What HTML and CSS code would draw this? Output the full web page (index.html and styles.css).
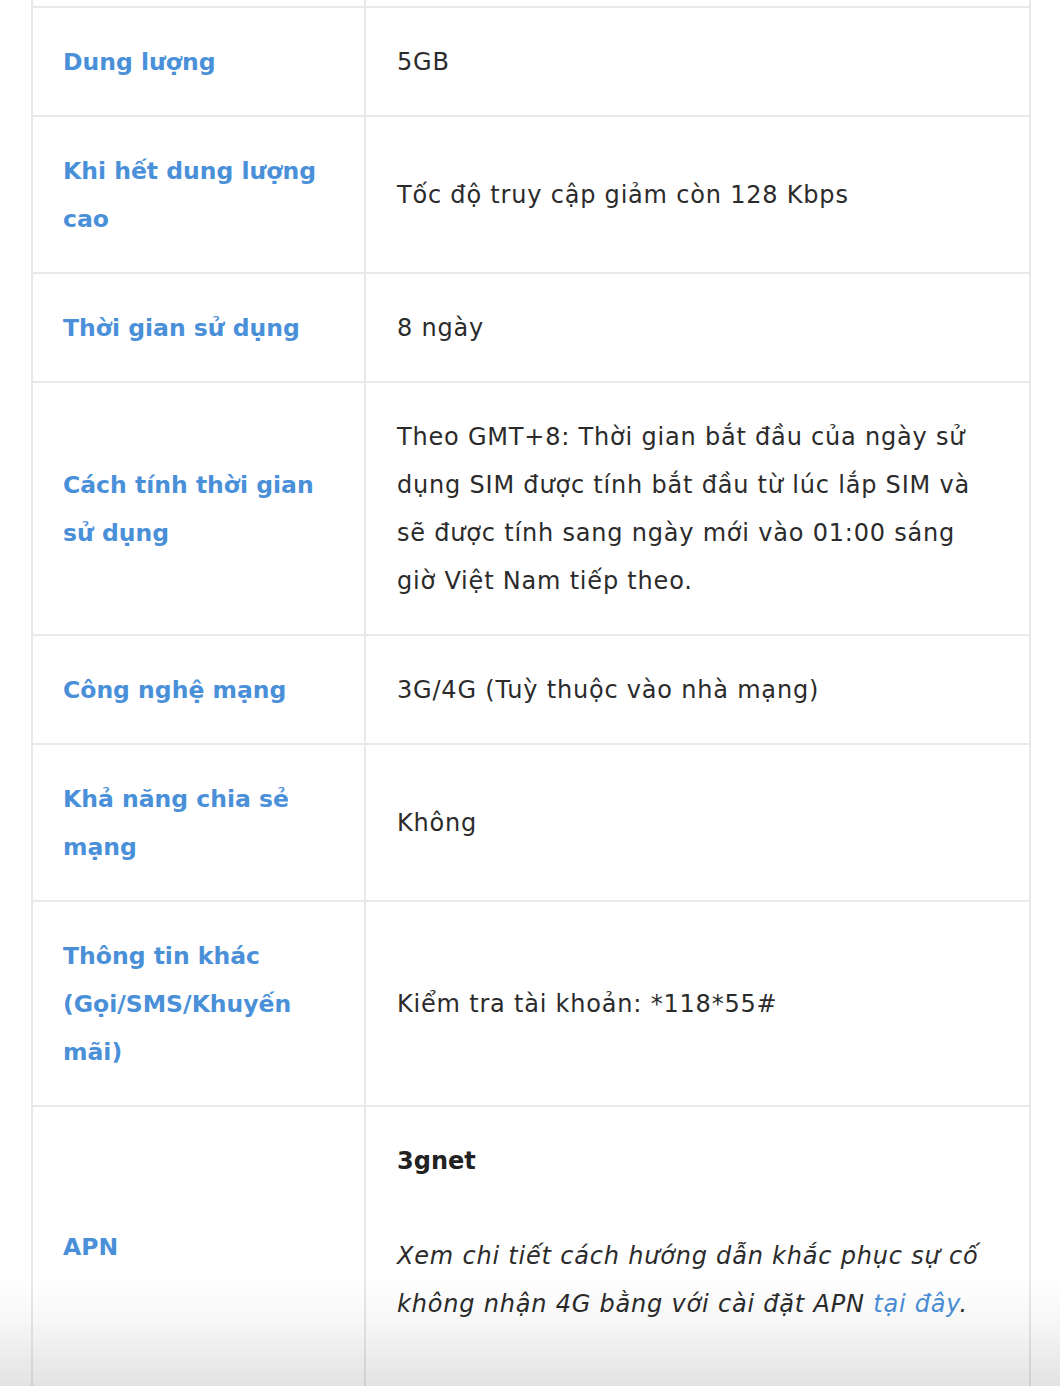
FILE: index.html
```html
<!DOCTYPE html>
<html lang="vi">
<head>
<meta charset="utf-8">
<title>Thông số SIM</title>
<link rel="stylesheet" href="styles.css">
</head>
<body>
<table class="spec">
  <colgroup>
    <col class="col-label">
    <col class="col-value">
  </colgroup>
  <tbody>
    <tr class="spacer"><td class="label"></td><td class="value"></td></tr>
    <tr><td class="label">Dung lượng</td><td class="value">5GB</td></tr>
    <tr><td class="label">Khi hết dung lượng cao</td><td class="value">Tốc độ truy cập giảm còn 128 Kbps</td></tr>
    <tr><td class="label">Thời gian sử dụng</td><td class="value">8 ngày</td></tr>
    <tr><td class="label">Cách tính thời gian sử dụng</td><td class="value">Theo GMT+8: Thời gian bắt đầu của ngày sử dụng SIM được tính bắt đầu từ lúc lắp SIM và sẽ được tính sang ngày mới vào 01:00 sáng giờ Việt Nam tiếp theo.</td></tr>
    <tr><td class="label">Công nghệ mạng</td><td class="value">3G/4G (Tuỳ thuộc vào nhà mạng)</td></tr>
    <tr><td class="label">Khả năng chia sẻ mạng</td><td class="value">Không</td></tr>
    <tr><td class="label">Thông tin khác (Gọi/SMS/Khuyến mãi)</td><td class="value">Kiểm tra tài khoản: *118*55#</td></tr>
    <tr>
      <td class="label">APN</td>
      <td class="value">
        <p class="apn-name"><strong>3gnet</strong></p>
        <p class="apn-note"><em>Xem chi tiết cách hướng dẫn khắc phục sự cố không nhận 4G bằng với cài đặt APN <a href="#">tại đây</a>.</em></p>
      </td>
    </tr>
  </tbody>
</table>
<div class="fade"></div>
</body>
</html>
```
FILE: styles.css
```css
html, body {
  margin: 0;
  padding: 0;
  background: #ffffff;
}

body {
  font-family: "DejaVu Sans", "Open Sans", sans-serif;
  color: #2b2b2b;
  overflow: hidden;
}

.spec {
  margin-left: 31px;
  width: 1000px;
  border-collapse: separate;
  border-spacing: 0;
  border-left: 2px solid #e9e9e9;
  border-right: 2px solid #e9e9e9;
  table-layout: fixed;
}

.spec .col-label {
  width: 333px;
}

.spec td {
  box-sizing: border-box;
  border-bottom: 2px solid #e9e9e9;
  padding: 30px 30px 29px 30px;
  vertical-align: middle;
  line-height: 48px;
}

.spec td.label {
  width: 333px;
  border-right: 2px solid #e9e9e9;
  font-weight: bold;
  font-size: 23.5px;
  color: #4a90d9;
}

.spec td.value {
  padding-left: 31px;
  font-size: 24px;
  letter-spacing: 0.8px;
  color: #2b2b2b;
}

.spec tr.spacer td {
  padding: 0;
  height: 8px;
  line-height: 6px;
}

.value p {
  margin: 0;
}

.value .apn-name {
  margin-bottom: 47px;
}

.value .apn-name strong {
  font-weight: bold;
  color: #222222;
  letter-spacing: 0;
}

.value .apn-note {
  margin-bottom: 29px;
}

.value a {
  color: #4a90d9;
  text-decoration: none;
}

.fade {
  position: fixed;
  left: 0;
  right: 0;
  bottom: 0;
  height: 110px;
  pointer-events: none;
  background: linear-gradient(to bottom, rgba(0,0,0,0) 0%, rgba(0,0,0,0.03) 40%, rgba(0,0,0,0.11) 100%);
}
```
